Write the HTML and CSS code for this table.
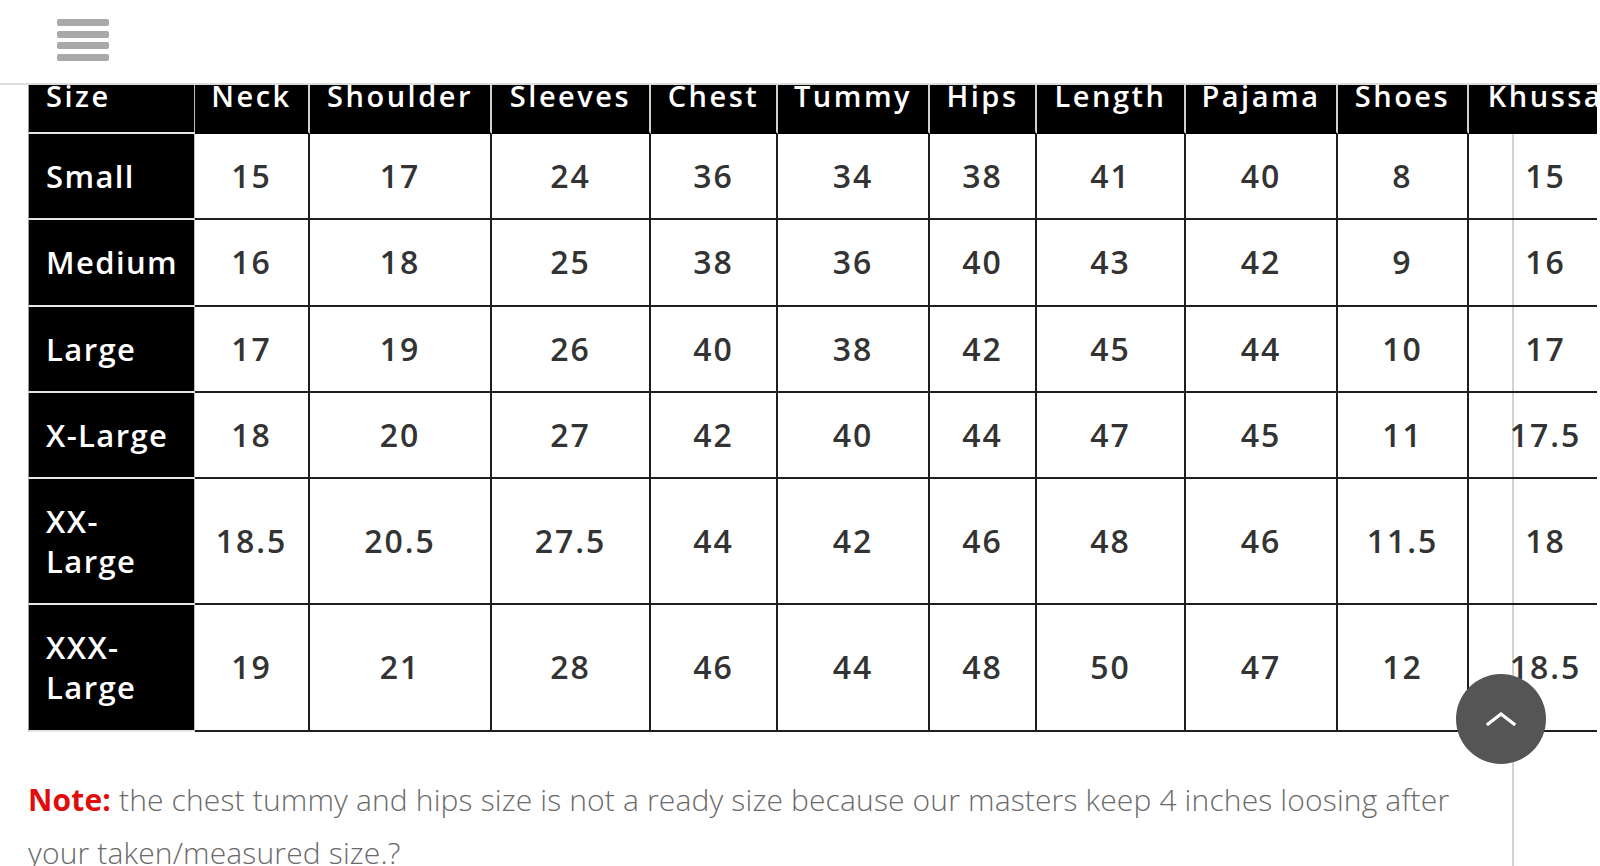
FILE: index.html
```html
<!DOCTYPE html>
<html lang="en">
<head>
<meta charset="utf-8">
<title>Size Chart</title>
<link rel="stylesheet" href="styles.css">
</head>
<body>
<header class="topbar">
  <button class="menu-btn" aria-label="Menu">
    <span class="bar"></span><span class="bar"></span><span class="bar"></span><span class="bar"></span>
  </button>
</header>

<main class="page">
  <div class="table-wrap">
    <table class="size-table">
      <colgroup>
        <col class="w-size"><col class="w-neck"><col class="w-shoulder"><col class="w-sleeves"><col class="w-chest"><col class="w-tummy"><col class="w-hips"><col class="w-length"><col class="w-pajama"><col class="w-shoes"><col class="w-khussa">
      </colgroup>
      <thead>
        <tr>
          <th class="corner">Size</th><th>Neck</th><th>Shoulder</th><th>Sleeves</th><th>Chest</th><th>Tummy</th><th>Hips</th><th>Length</th><th>Pajama</th><th>Shoes</th><th>Khussa</th>
        </tr>
      </thead>
      <tbody>
        <tr><th class="label">Small</th><td>15</td><td>17</td><td>24</td><td>36</td><td>34</td><td>38</td><td>41</td><td>40</td><td>8</td><td>15</td></tr>
        <tr class="row-tall"><th class="label">Medium</th><td>16</td><td>18</td><td>25</td><td>38</td><td>36</td><td>40</td><td>43</td><td>42</td><td>9</td><td>16</td></tr>
        <tr><th class="label">Large</th><td>17</td><td>19</td><td>26</td><td>40</td><td>38</td><td>42</td><td>45</td><td>44</td><td>10</td><td>17</td></tr>
        <tr><th class="label">X-Large</th><td>18</td><td>20</td><td>27</td><td>42</td><td>40</td><td>44</td><td>47</td><td>45</td><td>11</td><td>17.5</td></tr>
        <tr><th class="label">XX-Large</th><td>18.5</td><td>20.5</td><td>27.5</td><td>44</td><td>42</td><td>46</td><td>48</td><td>46</td><td>11.5</td><td>18</td></tr>
        <tr class="row-tall"><th class="label">XXX-Large</th><td>19</td><td>21</td><td>28</td><td>46</td><td>44</td><td>48</td><td>50</td><td>47</td><td>12</td><td>18.5</td></tr>
      </tbody>
    </table>
  </div>

  <p class="note"><strong class="note-label">Note:</strong> the chest tummy and hips size is not a ready size because our masters keep 4 inches loosing after your taken/measured size.?</p>
</main>

<a class="to-top" href="#" aria-label="Back to top">
  <svg width="30" height="14" viewBox="0 0 30 14" fill="none" stroke="#fff" stroke-width="3.2" stroke-linecap="square" stroke-linejoin="miter"><polyline points="2,12 15,2 28,12"/></svg>
</a>
</body>
</html>
```

FILE: styles.css
```css
* { box-sizing: border-box; }

html, body {
  margin: 0;
  padding: 0;
  background: #fff;
}

body {
  font-family: "Open Sans", "Noto Sans", sans-serif;
  color: #333;
  overflow: hidden;
}

/* top bar */
.topbar {
  position: fixed;
  top: 0;
  left: 0;
  right: 0;
  height: 85px;
  background: #fff;
  border-bottom: 2px solid #dcdcdc;
  z-index: 10;
  display: flex;
  align-items: flex-start;
  padding: 19px 0 0 57px;
}

.menu-btn {
  display: flex;
  flex-direction: column;
  gap: 4.5px;
  background: none;
  border: 0;
  padding: 0;
  cursor: pointer;
}

.menu-btn .bar {
  display: block;
  width: 52px;
  height: 7px;
  border-radius: 2px;
  background: #a9a9a9;
}

/* page */
.page {
  width: 1514px;
  min-height: 866px;
  padding: 60px 0 0 28px;
  border-right: 2px solid #d2d2d2;
}

.table-wrap {
  width: 1569px;
  overflow: hidden;
}

.size-table {
  table-layout: fixed;
  width: 1596px;
  border-collapse: separate;
  border-spacing: 0;
}

.w-size { width: 167px; }
.w-neck { width: 115px; }
.w-shoulder { width: 182px; }
.w-sleeves { width: 159px; }
.w-chest { width: 127px; }
.w-tummy { width: 152px; }
.w-hips { width: 107px; }
.w-length { width: 149px; }
.w-pajama { width: 152px; }
.w-shoes { width: 131px; }
.w-khussa { width: 155px; }

.size-table thead th {
  height: 74px;
  background: #000;
  color: #fff;
  font-size: 29px;
  font-weight: 600;
  letter-spacing: 2.5px;
  text-align: center;
  padding: 0 0 2px;
  border-right: 2px solid #cfcfcf;
  border-bottom: 2px solid #000;
  white-space: nowrap;
  overflow: visible;
}

.size-table thead th.corner {
  text-align: left;
  padding-left: 17px;
  border-left: 1px solid #9a9a9a;
  border-right: 1px solid #bdbdbd;
  border-bottom: 2px solid #e6e6e6;
}

.size-table th.label {
  background: #000;
  color: #fff;
  font-size: 31px;
  font-weight: 600;
  letter-spacing: 1.4px;
  line-height: 40px;
  text-align: left;
  padding: 22px 12px 22px 17px;
  border-left: 1px solid #9a9a9a;
  border-right: 1px solid #bdbdbd;
  border-bottom: 2px solid #e6e6e6;
}

.size-table td {
  font-size: 32px;
  font-weight: 600;
  letter-spacing: 2px;
  line-height: 40px;
  color: #333;
  text-align: center;
  padding: 22px 0;
  border-right: 2px solid #1e1e1e;
  border-bottom: 2px solid #1e1e1e;
}

.size-table tr.row-tall th.label,
.size-table tr.row-tall td {
  padding-bottom: 23px;
}

/* note */
.note {
  margin: 41px 0 0;
  padding-right: 10px;
  font-size: 30px;
  line-height: 53px;
  font-weight: 300;
  letter-spacing: 0.15px;
  color: #6a6a6a;
}

.note-label {
  color: #e00d0d;
  font-weight: 700;
}

/* back to top */
.to-top {
  position: fixed;
  right: 54px;
  bottom: 102px;
  width: 90px;
  height: 90px;
  border-radius: 50%;
  background: #555;
  display: flex;
  align-items: center;
  justify-content: center;
  z-index: 20;
}
```
